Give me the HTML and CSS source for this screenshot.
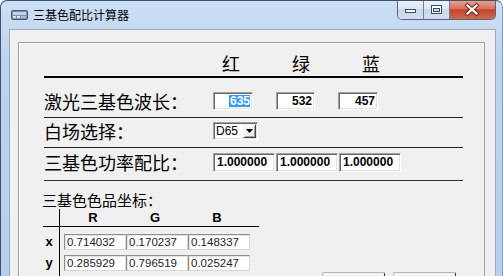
FILE: index.html
```html
<!DOCTYPE html>
<html>
<head>
<meta charset="utf-8">
<title>三基色配比计算器</title>
<link rel="stylesheet" href="styles.css">
</head>
<body>
<div class="window">
  <div class="titlebar">
    <svg class="app-icon" width="17" height="10" viewBox="0 0 17 10">
      <rect x="0.5" y="0.5" width="16" height="9" rx="1.5" fill="#7f8fae" stroke="#4a5874"/>
      <rect x="2" y="2" width="13" height="3" fill="#c3d3ec"/>
      <rect x="2" y="6" width="3" height="2" fill="#dbe5f5"/>
      <rect x="6" y="6" width="3" height="2" fill="#dbe5f5"/>
      <rect x="10" y="6" width="5" height="2" fill="#a9bddf"/>
    </svg>
    <span class="title">三基色配比计算器</span>
    <div class="controls">
      <div class="cbtn min">
        <svg width="25" height="18" viewBox="0 0 25 18"><rect x="7.5" y="9.5" width="10" height="3" fill="#fff" stroke="#3b4c66"/></svg>
      </div>
      <div class="cbtn max">
        <svg width="25" height="18" viewBox="0 0 25 18"><rect x="7.5" y="5.5" width="10" height="8" fill="#fff" stroke="#3b4c66"/><rect x="9.5" y="8.5" width="6" height="3" fill="#c9d6e8" stroke="#3b4c66"/></svg>
      </div>
      <div class="cbtn close">
        <svg width="45" height="18" viewBox="0 0 45 18">
          <path d="M17.5 5.5 L26.5 13.5 M26.5 5.5 L17.5 13.5" stroke="#6b2a1f" stroke-width="4.2" stroke-linecap="square"/>
          <path d="M17.5 5.5 L26.5 13.5 M26.5 5.5 L17.5 13.5" stroke="#fff" stroke-width="2.2" stroke-linecap="square"/>
        </svg>
      </div>
    </div>
  </div>
  <div class="client">
    <div class="panel">
      <div class="row head">
        <span class="hcell">红</span>
        <span class="hcell">绿</span>
        <span class="hcell">蓝</span>
      </div>
      <div class="row r1">
        <span class="label">激光三基色波长：</span>
        <div class="fields f-wave">
          <div class="edit w40 right"><span class="sel">635</span></div>
          <div class="edit w39 right">532</div>
          <div class="edit w40 right">457</div>
        </div>
      </div>
      <div class="row r2">
        <span class="label">白场选择：</span>
        <div class="combo">
          <span class="combo-text">D65</span>
          <span class="combo-btn">
            <svg width="7" height="4" viewBox="0 0 7 4"><path d="M0 0 H7 L3.5 4 Z" fill="#000"/></svg>
          </span>
        </div>
      </div>
      <div class="row r3">
        <span class="label">三基色功率配比：</span>
        <div class="fields f-power">
          <div class="edit w62">1.000000</div>
          <div class="edit w62">1.000000</div>
          <div class="edit w62">1.000000</div>
        </div>
      </div>
      <div class="section">
        <div class="coords">
          <div class="sec-title">三基色色品坐标：</div>
          <div class="table">
            <div class="trow thead">
              <span class="tlabel"></span>
              <div class="tcells">
                <span class="th">R</span>
                <span class="th">G</span>
                <span class="th">B</span>
              </div>
            </div>
            <div class="trow tdata first">
              <span class="tlabel">x</span>
              <div class="tcells">
                <div class="tedit">0.714032</div>
                <div class="tedit">0.170237</div>
                <div class="tedit">0.148337</div>
              </div>
            </div>
            <div class="trow tdata">
              <span class="tlabel">y</span>
              <div class="tcells">
                <div class="tedit">0.285929</div>
                <div class="tedit">0.796519</div>
                <div class="tedit">0.025247</div>
              </div>
            </div>
            <div class="trow tfill">
              <span class="tlabel"></span>
            </div>
          </div>
        </div>
        <div class="buttons">
          <div class="pbtn"></div>
          <div class="pbtn"></div>
        </div>
      </div>
    </div>
  </div>
</div>
</body>
</html>
```
FILE: styles.css
```css
html, body {
  margin: 0;
  padding: 0;
}
body {
  width: 503px;
  height: 276px;
  overflow: hidden;
  background: #ffffff;
  font-family: "Noto Sans CJK SC", "Noto Sans", sans-serif;
}
.window {
  box-sizing: border-box;
  width: 503px;
  height: 276px;
  overflow: hidden;
  border: 1px solid #3f526b;
  border-right-color: #7e9cc4;
  border-bottom: none;
  border-radius: 7px 7px 0 0;
  background: linear-gradient(to bottom, #cbdff5 0px, #c6dbf3 28px, #bcd4f0 60px, #b6cfee 100%);
  padding: 0 6px 0 8px;
}
.titlebar {
  height: 28px;
  display: flex;
  align-items: flex-start;
}
.app-icon {
  margin: 9px 0 0 2px;
  display: block;
}
.title {
  margin: 6px 0 0 5px;
  font-size: 12px;
  line-height: 16px;
  color: #000;
}
.controls {
  margin-left: auto;
  margin-top: -1px;
  display: flex;
  height: 19px;
  border: 1px solid #52657f;
  border-top: none;
  border-radius: 0 0 5px 5px;
  overflow: hidden;
}
.cbtn {
  height: 19px;
  display: flex;
  align-items: flex-start;
}
.cbtn svg {
  display: block;
}
.min, .max {
  width: 25px;
  border-right: 1px solid #6e819c;
  background: linear-gradient(to bottom, #edf3fa 0%, #dce6f2 45%, #c9d8ea 50%, #d3e0ef 100%);
}
.close {
  width: 45px;
  background: linear-gradient(to bottom, #e9a897 0%, #d9715b 45%, #c4432d 52%, #d16a50 100%);
}
.client {
  box-sizing: border-box;
  height: 260px;
  border: 1px solid #9eabbb;
  border-bottom: none;
  background: #f0f0f0;
  padding: 12px 10px 0 8px;
  overflow: hidden;
}
.panel {
  height: 300px;
  border: 1px solid #a0a0a0;
  box-shadow: inset 1px 1px 0 #ffffff;
  padding-left: 25px;
}
.row {
  width: 419px;
  display: flex;
  box-sizing: border-box;
}
.head {
  height: 35px;
  align-items: flex-end;
  padding-bottom: 4px;
  border-bottom: 2px solid #000;
}
.hcell {
  font-size: 18px;
  line-height: 18px;
  color: #000;
  margin-left: 52px;
}
.hcell:first-child {
  margin-left: 178px;
}
.label {
  width: 169px;
  font-size: 18px;
  line-height: 18px;
  color: #000;
  white-space: nowrap;
}
.r1 {
  height: 40px;
  padding-top: 7px;
  align-items: center;
  border-bottom: 1px solid #222;
}
.r2 {
  height: 30px;
  padding-bottom: 3px;
  align-items: center;
  border-bottom: 1px solid #222;
}
.r3 {
  height: 33px;
  padding-bottom: 4px;
  align-items: center;
  border-bottom: 1px solid #333;
}
.fields {
  display: flex;
}
.f-wave {
  gap: 23px;
}
.f-power {
  gap: 1px;
}
.edit {
  box-sizing: border-box;
  height: 18px;
  background: #fff;
  border-top: 1px solid #a0a0a0;
  border-left: 1px solid #a0a0a0;
  border-right: 1px solid #ffffff;
  border-bottom: 1px solid #ffffff;
  box-shadow: inset 1px 1px 0 #696969, inset -1px -1px 0 #e3e3e3;
  font-family: "Liberation Sans", Arial, sans-serif;
  font-weight: bold;
  font-size: 12px;
  line-height: 16px;
  color: #000;
  padding: 0 2px 0 3px;
  white-space: nowrap;
}
.f-power .edit {
  height: 19px;
  line-height: 17px;
  padding-left: 3px;
}
.w40 { width: 40px; }
.w39 { width: 39px; }
.w62 { width: 62px; }
.right {
  text-align: right;
}
.sel {
  display: inline-block;
  background: #3399ff;
  color: #fff;
  line-height: 12px;
  padding-left: 1px;
}
.combo {
  box-sizing: border-box;
  width: 45px;
  height: 18px;
  display: flex;
  align-items: center;
  background: #fff;
  border-top: 1px solid #a0a0a0;
  border-left: 1px solid #a0a0a0;
  border-right: 1px solid #ffffff;
  border-bottom: 1px solid #ffffff;
  box-shadow: inset 1px 1px 0 #696969, inset -1px -1px 0 #e3e3e3;
  padding: 2px 1px 2px 2px;
}
.combo-text {
  flex: 1;
  font-family: "Liberation Sans", Arial, sans-serif;
  font-size: 12px;
  line-height: 14px;
  color: #000;
}
.combo-btn {
  box-sizing: border-box;
  width: 13px;
  height: 14px;
  background: #f0f0f0;
  border-top: 1px solid #f0f0f0;
  border-left: 1px solid #f0f0f0;
  border-right: 1px solid #404040;
  border-bottom: 1px solid #404040;
  box-shadow: inset 1px 1px 0 #fff, inset -1px -1px 0 #a0a0a0;
  display: flex;
  align-items: center;
  justify-content: center;
}
.combo-btn svg {
  display: block;
}
.section {
  display: flex;
}
.coords {
  display: flex;
  flex-direction: column;
}
.sec-title {
  margin: 11px 0 0 -2px;
  font-size: 15px;
  line-height: 16px;
  color: #000;
  white-space: nowrap;
}
.table {
  margin: 1px 0 0 -1px;
  width: 216px;
}
.trow {
  display: flex;
}
.tlabel {
  width: 17px;
  border-right: 1px solid #000;
  font-family: "Liberation Sans", Arial, sans-serif;
  font-weight: bold;
  font-size: 13px;
  line-height: 16px;
  color: #000;
  text-align: center;
  box-sizing: border-box;
  padding-right: 4px;
}
.thead {
  height: 17px;
  border-bottom: 1px solid #000;
}
.tcells {
  display: flex;
  padding-left: 4px;
}
.th {
  width: 62px;
  text-align: center;
  padding-right: 4px;
  box-sizing: border-box;
  font-family: "Liberation Sans", Arial, sans-serif;
  font-weight: bold;
  font-size: 13px;
  line-height: 18px;
  color: #000;
}
.tdata {
  height: 21px;
}
.tdata .tlabel,
.tdata .tcells {
  padding-top: 5px;
}
.tdata.first {
  height: 23px;
}
.tdata.first .tlabel,
.tdata.first .tcells {
  padding-top: 7px;
}
.tfill {
  height: 40px;
}
.tedit {
  box-sizing: border-box;
  width: 62px;
  height: 16px;
  background: #fff;
  border-top: 1px solid #8f8f8f;
  border-left: 1px solid #8f8f8f;
  border-right: 1px solid #d6d6d6;
  border-bottom: 1px solid #d6d6d6;
  box-shadow: inset 1px 1px 0 #e2e2e2;
  font-family: "Liberation Sans", Arial, sans-serif;
  font-size: 11.5px;
  line-height: 14px;
  color: #222;
  padding-left: 2px;
  white-space: nowrap;
  overflow: hidden;
}
.buttons {
  display: flex;
  gap: 8px;
  margin: 91px 0 0 63px;
}
.pbtn {
  box-sizing: border-box;
  width: 63px;
  height: 23px;
  border: 1px solid #b5b5b5;
  border-right-color: #3a3a3a;
  border-radius: 2px;
  background: linear-gradient(to bottom, #f6f6f6, #e6e6e6 50%, #dcdcdc 50%, #d2d2d2);
}
```
